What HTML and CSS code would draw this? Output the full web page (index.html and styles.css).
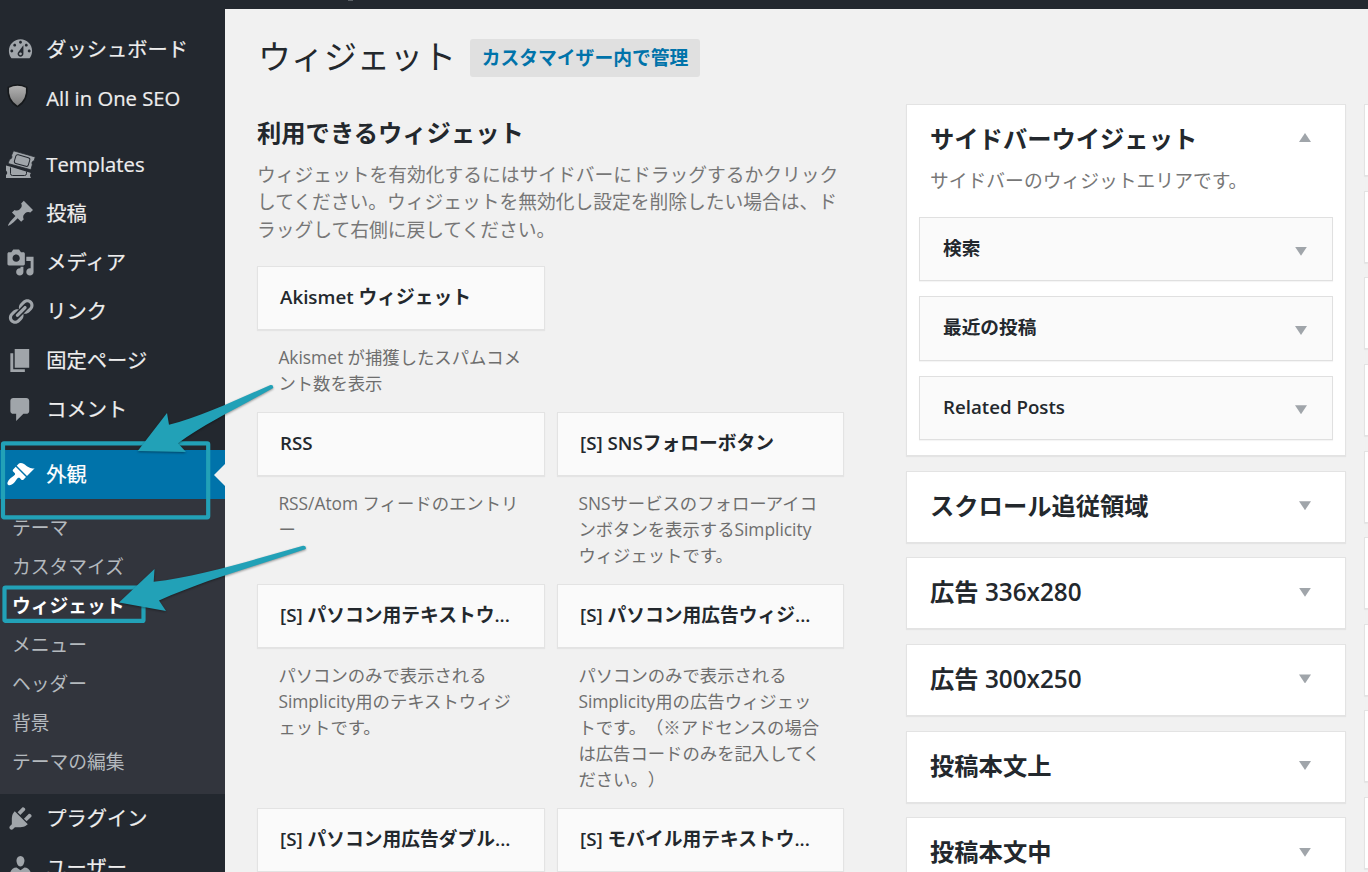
FILE: index.html
```html
<!DOCTYPE html>
<html lang="ja">
<head>
<meta charset="utf-8">
<title>ウィジェット</title>
<link rel="stylesheet" href="styles.css">
</head>
<body>
<div class="adminbar"><span class="adminbar-mark"></span></div>
<div class="layout">
  <nav class="menu">
    <a class="item"><svg class="icon" viewBox="0 0 20 20"><path d="M3.76 16h12.48c1.1-1.37 1.76-3.11 1.76-5 0-4.42-3.58-8-8-8s-8 3.58-8 8c0 1.89.66 3.63 1.76 5zM10 4c.55 0 1 .45 1 1s-.45 1-1 1-1-.45-1-1 .45-1 1-1zM6 6c.55 0 1 .45 1 1s-.45 1-1 1-1-.45-1-1 .45-1 1-1zm8 0c.55 0 1 .45 1 1s-.45 1-1 1-1-.45-1-1 .45-1 1-1zm-5.37 5.55L12 7v6c0 1.1-.9 2-2 2s-2-.9-2-2c0-.57.24-1.08.63-1.45zM4 10c.55 0 1 .45 1 1s-.45 1-1 1-1-.45-1-1 .45-1 1-1zm12 0c.55 0 1 .45 1 1s-.45 1-1 1-1-.45-1-1 .45-1 1-1zm-5 3c0-.55-.45-1-1-1s-1 .45-1 1 .45 1 1 1 1-.45 1-1z"/></svg><span>ダッシュボード</span></a>
    <a class="item"><svg class="icon shield" viewBox="0 0 29 29"><defs><linearGradient id="sh" x1="0" y1="0" x2="0" y2="1"><stop offset="0" stop-color="#b4b4b4"/><stop offset="1" stop-color="#787878"/></linearGradient></defs><path d="M2.3 5.3Q11.500 .8 20.700 5.300Q22 18.500 11.500 24.600Q1 18.500 2.300 5.300Z" fill="url(#sh)" stroke="#15181b" stroke-width="1.500"/></svg><span>All in One SEO</span></a>
    <div class="separator"></div>
    <a class="item"><svg class="icon" viewBox="0 0 29 29"><path d="M0 15.500l5.500 1.500 19.500 6q-2 2 0 5H0v-3q2.500-2 0-4.500z"/><path d="M7.500 .8L29.300 7l-1.200 3.800q-3 .7-1.800 4l-1.400 5L2 13.500l1.700-4.300q3-.5 1.900-4z" stroke="#23282f" stroke-width=".8"/><rect x="9" y="6" width="14.500" height="9" rx="2" transform="rotate(16 16 10)" class="cut"/><path d="M4.500 17.500v6q0 2 2 2h12q2 0 2-2v-2" class="cut"/></svg><span>Templates</span></a>
    <a class="item"><svg class="icon" viewBox="0 0 20 20"><path d="M10.440 3.020l1.820-1.820 6.360 6.350-1.830 1.820c-1.050-.68-2.480-.57-3.410.36l-.75.75c-.92.93-1.040 2.350-.35 3.410l-1.830 1.820-2.410-2.410-2.800 2.790c-.42.42-3.380 2.710-3.800 2.290s1.860-3.390 2.280-3.810l2.790-2.790L4.100 9.360l1.830-1.820c1.050.69 2.480.57 3.400-.36l.75-.75c.93-.92 1.050-2.350.36-3.410z"/></svg><span>投稿</span></a>
    <a class="item"><svg class="icon" viewBox="0 0 20 20"><path d="M13 11V4c0-.55-.45-1-1-1h-1.670L9 1H5L3.670 3H2c-.55 0-1 .45-1 1v7c0 .55.45 1 1 1h10c.55 0 1-.45 1-1zM7 4.500c1.380 0 2.500 1.120 2.500 2.500S8.380 9.500 7 9.500 4.500 8.380 4.500 7 5.620 4.500 7 4.500zM14 6h5v10.500c0 1.380-1.120 2.500-2.500 2.500S14 17.880 14 16.500s1.120-2.500 2.500-2.500c.17 0 .34.020.5.050V9h-3V6zm-4 8.050V13h2v3.500c0 1.380-1.120 2.500-2.500 2.500S7 17.880 7 16.500 8.120 14 9.500 14c.17 0 .34.020.5.050z"/></svg><span>メディア</span></a>
    <a class="item"><svg class="icon" viewBox="0 0 20 20"><path d="M17.740 2.760c1.680 1.690 1.680 4.410 0 6.100l-1.530 1.520c-1.120 1.120-2.700 1.470-4.140 1.090l2.620-2.610.76-.77.76-.76c.84-.84.84-2.200 0-3.040-.84-.85-2.200-.85-3.040 0l-.77.76-3.380 3.380c-.37-1.440-.02-3.020 1.100-4.140l1.520-1.530c1.690-1.680 4.420-1.680 6.100 0zM8.590 13.430l5.340-5.340c.42-.42.42-1.100 0-1.520-.44-.43-1.130-.39-1.530 0l-5.330 5.340c-.42.42-.42 1.100 0 1.520.44.43 1.130.39 1.520 0zm-.76 2.290l4.140-4.150c.38 1.440.030 3.020-1.090 4.140l-1.520 1.530c-1.690 1.680-4.410 1.680-6.100 0-1.680-1.680-1.680-4.420 0-6.100l1.530-1.520c1.120-1.120 2.700-1.470 4.140-1.100l-4.140 4.150c-.85.84-.85 2.200 0 3.050.84.84 2.200.84 3.040 0z"/></svg><span>リンク</span></a>
    <a class="item"><svg class="icon" viewBox="0 0 20 20"><path d="M6 15V2h10v13H6zm-1 1h8v2H3V5h2v11z"/></svg><span>固定ページ</span></a>
    <a class="item"><svg class="icon" viewBox="0 0 20 20"><path d="M5 2h9c1.100 0 2 .9 2 2v7c0 1.100-.9 2-2 2h-2l-5 5v-5H5c-1.100 0-2-.9-2-2V4c0-1.100.9-2 2-2z"/></svg><span>コメント</span></a>
    <div class="separator short"></div>
    <a class="item current"><svg class="icon" viewBox="0 0 20 20"><path d="M14.480 11.060L7.410 3.990l1.500-1.500c.5-.56 2.300-.47 3.510.32 1.210.8 1.430 1.280 2.910 2.100 1.180.64 2.450 1.260 4.450.85zm-.71.71L6.700 4.700 4.930 6.470c-.39.39-.39 1.020 0 1.410l1.060 1.060c.39.39.39 1.030 0 1.420-.6.6-1.430 1.110-2.210 1.690-.35.26-.7.53-1.010.84C1.430 14.230.4 16.080 1.400 17.070c.99 1 2.840-.03 4.180-1.360.31-.31.58-.66.85-1.020.57-.78 1.080-1.610 1.690-2.210.39-.39 1.020-.39 1.410 0l1.060 1.060c.39.39 1.020.39 1.410 0z"/></svg><span>外観</span></a>
    <div class="submenu">
      <a>テーマ</a><a>カスタマイズ</a><a class="active">ウィジェット</a><a>メニュー</a><a>ヘッダー</a><a>背景</a><a>テーマの編集</a>
    </div>
    <a class="item"><svg class="icon" viewBox="0 0 20 20"><path d="M13.110 4.360L9.870 7.600 8 5.730l3.240-3.240c.35-.34 1.050-.2 1.560.32.52.51.66 1.210.31 1.550zm-8 1.770l.91-1.120 9.010 9.010-1.190.84c-.71.71-2.630 1.160-3.820 1.160H6.140L4.900 17.260c-.59.59-1.540.59-2.120 0-.59-.58-.59-1.530 0-2.120l1.240-1.240v-3.880c0-1.130.4-3.190 1.090-3.890zm7.260 3.970l3.240-3.240c.34-.35 1.040-.21 1.550.31.52.51.66 1.210.31 1.550l-3.240 3.250z"/></svg><span>プラグイン</span></a>
    <a class="item"><svg class="icon" viewBox="0 0 20 20"><path d="M10 9.250c-2.270 0-2.730-3.440-2.730-3.440C7 4.020 7.820 2 9.970 2c2.160 0 2.980 2.020 2.710 3.810 0 0-.41 3.440-2.680 3.440zm0 2.570L12.720 10c2.390 0 4.520 2.330 4.520 4.530v2.490s-3.650 1.130-7.240 1.130c-3.650 0-7.240-1.130-7.240-1.130v-2.490c0-2.250 1.940-4.480 4.470-4.480z"/></svg><span>ユーザー</span></a>
  </nav>

  <main class="content">
    <section class="available">
      <header class="page-head">
        <h1>ウィジェット</h1>
        <a class="manage">カスタマイザー内で管理</a>
      </header>
      <h2>利用できるウィジェット</h2>
      <p class="intro">ウィジェットを有効化するにはサイドバーにドラッグするかクリック<br>してください。ウィジェットを無効化し設定を削除したい場合は、ド<br>ラッグして右側に戻してください。</p>
      <div class="cards">
        <div class="cell"><h3 class="card">Akismet ウィジェット</h3><p>Akismet が捕獲したスパムコメ<br>ント数を表示</p></div>
        <div class="cell"></div>
        <div class="cell"><h3 class="card">RSS</h3><p>RSS/Atom フィードのエントリ<br>ー</p></div>
        <div class="cell"><h3 class="card">[S] SNSフォローボタン</h3><p>SNSサービスのフォローアイコ<br>ンボタンを表示するSimplicity<br>ウィジェットです。</p></div>
        <div class="cell"><h3 class="card">[S] パソコン用テキストウ...</h3><p>パソコンのみで表示される<br>Simplicity用のテキストウィジ<br>ェットです。</p></div>
        <div class="cell"><h3 class="card">[S] パソコン用広告ウィジ...</h3><p>パソコンのみで表示される<br>Simplicity用の広告ウィジェッ<br>トです。（※アドセンスの場合<br>は広告コードのみを記入してく<br>ださい。）</p></div>
        <div class="cell"><h3 class="card">[S] パソコン用広告ダブル...</h3></div>
        <div class="cell"><h3 class="card">[S] モバイル用テキストウ...</h3></div>
      </div>
    </section>

    <section class="areas">
      <div class="area open">
        <div class="area-head"><h2>サイドバーウイジェット</h2><i class="tri up"></i></div>
        <p class="area-note">サイドバーのウィジットエリアです。</p>
        <div class="placed">
          <div class="widget"><h3>検索</h3><i class="tri"></i></div>
          <div class="widget"><h3>最近の投稿</h3><i class="tri"></i></div>
          <div class="widget"><h3>Related Posts</h3><i class="tri"></i></div>
        </div>
      </div>
      <div class="area"><div class="area-head"><h2>スクロール追従領域</h2><i class="tri"></i></div></div>
      <div class="area"><div class="area-head"><h2>広告 336x280</h2><i class="tri"></i></div></div>
      <div class="area"><div class="area-head"><h2>広告 300x250</h2><i class="tri"></i></div></div>
      <div class="area"><div class="area-head"><h2>投稿本文上</h2><i class="tri"></i></div></div>
      <div class="area"><div class="area-head"><h2>投稿本文中</h2><i class="tri"></i></div></div>
    </section>

    <section class="areas second">
      <div class="area"></div><div class="area"></div><div class="area"></div><div class="area"></div><div class="area"></div><div class="area"></div><div class="area"></div><div class="area"></div><div class="area"></div>
    </section>
  </main>
</div>

<svg class="callouts" width="320" height="640" viewBox="0 0 320 640">
  <g class="frames">
    <rect x="3" y="443.300" width="205.200" height="74" rx="1"/>
    <rect x="4.500" y="587.500" width="139" height="33.400" rx="1"/>
  </g>
  <g class="arrows">
    <path d="M137.700 451L167 413L169 424.700C198 418 236 400 270.500 385Q273.500 384.500 273.200 388C238 408 204 424 178 443.300L186 452Z"/>
    <path d="M119 602.500L154.500 569L153.700 581.700C198 577 252 560 303 545.700Q306.500 545.500 305.800 549C256 566 204 580 159 600.500L166 611Z"/>
  </g>
</svg>
</body>
</html>
```
FILE: styles.css
```css
* { box-sizing: border-box; }

html, body {
  height: 872px;
  overflow: hidden;
}

body {
  margin: 0;
  position: relative;
  background: #f1f1f1;
  color: #23282d;
  font-family: "Open Sans", "Noto Sans CJK JP", sans-serif;
  font-size: 18.8px;
  text-spacing-trim: space-all;
  white-space: nowrap;
}

h1, h2, h3, p { margin: 0; }

.adminbar {
  height: 9px;
  padding-left: 348px;
  background: #23282f;
}

.adminbar-mark {
  display: block;
  width: 5px;
  height: 1px;
  background: #5b6066;
}

.layout {
  display: flex;
  height: 863px;
}

/* Admin menu */
.menu {
  flex: 0 0 225px;
  height: 863px;
  padding-top: 16px;
  overflow: hidden;
  background: #23282f;
}

.item {
  display: flex;
  align-items: center;
  height: 49px;
  padding-left: 6px;
  color: #eee;
  font-size: 20.25px;
  line-height: 49px;
  -webkit-text-stroke: .2px currentColor;
}

.icon {
  flex: none;
  width: 29px;
  height: 29px;
  margin: 0 11.3px 0 0;
  fill: #a0a5aa;
  overflow: visible;
}

.shield { margin-top: -4px; }

.cut {
  fill: none;
  stroke: #23282f;
  stroke-width: 1;
}

.separator { height: 17px; }
.separator.short { height: 16px; }

.item.current {
  justify-content: flex-start;
  background: #0073aa;
  color: #fff;
}

.current .icon { fill: #fff; }

.current::after {
  content: "";
  margin-left: auto;
  border: 11.5px solid transparent;
  border-left-width: 0;
  border-right-color: #f1f1f1;
}

.submenu {
  display: flex;
  flex-direction: column;
  height: 295px;
  padding: 9px 0 0 12px;
  background: #32353d;
}

.submenu a {
  height: 39px;
  color: #b4b9be;
  font-size: 18.75px;
  line-height: 39px;
}

.submenu .active {
  color: #fff;
  font-weight: 700;
}

/* Page */
.content {
  display: flex;
  flex: 1;
  min-width: 0;
  padding-left: 32px;
}

.available {
  flex: none;
  width: 587px;
  padding-top: 30px;
}

.page-head {
  display: flex;
  align-items: center;
  height: 38px;
}

h1 {
  width: 213px;
  padding-left: 1px;
  font-size: 33px;
  font-weight: 400;
  line-height: 36px;
  height: 38px;
}

.manage {
  width: 230px;
  height: 38px;
  border-radius: 3px;
  background: #e0e0e0;
  color: #0073aa;
  font-size: 18.8px;
  font-weight: 600;
  line-height: 39px;
  text-align: center;
}

.available > h2 {
  margin-top: 39px;
  font-size: 24.3px;
  font-weight: 600;
  line-height: 34px;
}

.intro {
  margin-top: 11px;
  color: #777;
  font-size: 18.75px;
  line-height: 27.3px;
}

.cards {
  display: grid;
  grid-template-columns: 288px 287px;
  column-gap: 12px;
  margin-top: 23px;
}

.card {
  height: 64px;
  padding-left: 22px;
  border: 1px solid #e3e3e3;
  background: #fafafa;
  box-shadow: 0 1px 1px rgba(0, 0, 0, .05);
  font-size: 18.75px;
  font-weight: 600;
  line-height: 60px;
}

.cell p {
  padding: 14px 0 16px 21.4px;
  color: #6e6e6e;
  font-size: 17.35px;
  line-height: 26px;
}

/* Widget areas */
.areas {
  display: flex;
  flex: none;
  flex-direction: column;
  gap: 14.65px;
  width: 440px;
  margin-left: 62px;
  padding-top: 95px;
}

.area {
  flex: none;
  height: 72px;
  border: 1px solid #e3e3e3;
  background: #fff;
  box-shadow: 0 1px 1px rgba(0, 0, 0, .05);
}

.area.open { height: 352px; }

.area-head {
  display: flex;
  align-items: center;
  justify-content: space-between;
  height: 68px;
  padding: 0 34px 0 23px;
}

.area-head h2 {
  font-size: 24.3px;
  font-weight: 600;
  line-height: 68px;
}

.tri {
  width: 12px;
  height: 9px;
  background: #a0a5aa;
  clip-path: polygon(0 0, 100% 0, 50% 100%);
}

.tri.up {
  margin-top: -3px;
  clip-path: polygon(0 100%, 50% 0, 100% 100%);
}

.area-note {
  height: 44px;
  margin-top: -6px;
  padding-left: 23px;
  color: #777;
  font-size: 18.8px;
  line-height: 28px;
}

.placed {
  display: flex;
  flex-direction: column;
  gap: 15px;
  margin-top: 6px;
  padding: 0 12px;
}

.widget {
  display: flex;
  align-items: center;
  justify-content: space-between;
  height: 64.3px;
  padding: 0 25px 0 23px;
  border: 1px solid #e0e0e0;
  background: #fafafa;
  box-shadow: 0 1px 1px rgba(0, 0, 0, .04);
}

.widget h3 {
  height: 62px;
  font-size: 18.7px;
  font-weight: 600;
  line-height: 60px;
}

.widget .tri { margin-top: 4px; }

.second {
  flex: 1;
  width: auto;
  min-width: 0;
  margin-left: 18px;
}

.second .area { border-right: 0; }

/* Annotations over the page */
.callouts {
  position: absolute;
  top: 0;
  left: 0;
  pointer-events: none;
}

.frames rect {
  fill: none;
  stroke: #22a1b7;
  stroke-width: 4.2;
}

.arrows path {
  fill: #22a1b7;
  filter: drop-shadow(0 1px 1px rgba(0, 0, 0, .4));
}
```
